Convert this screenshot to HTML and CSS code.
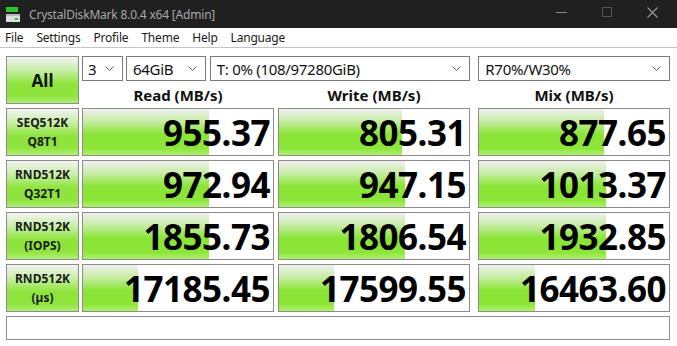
FILE: index.html
```html
<!DOCTYPE html>
<html lang="en">
<head>
    <meta charset="UTF-8">
    <title>CrystalDiskMark 8.0.4 x64 [Admin]</title>
    <link rel="stylesheet" href="styles.css">
</head>
<body>
    <div class="titlebar">
        <svg class="app-icon" width="16" height="16" viewBox="0 0 16 16">
            <rect x="1" y="0" width="12" height="5" fill="#2fc32f"/>
            <rect x="1" y="7" width="14" height="2" fill="#b8b8b8"/>
            <rect x="1" y="9" width="14" height="6" fill="#dcdcdc"/>
            <rect x="10" y="11" width="3" height="2" fill="#2fc32f"/>
        </svg>
        <div class="title">CrystalDiskMark 8.0.4 x64 [Admin]</div>
        <div class="win-buttons">
            <svg width="46" height="28" viewBox="0 0 46 28"><line x1="18" y1="12.5" x2="29" y2="12.5" stroke="#8a8a8a" stroke-width="1"/></svg>
            <svg width="46" height="28" viewBox="0 0 46 28"><rect x="18.5" y="7.5" width="9" height="9" fill="none" stroke="#555" stroke-width="1"/></svg>
            <svg width="46" height="28" viewBox="0 0 46 28"><path d="M17.5 7.5 L27.5 17.5 M27.5 7.5 L17.5 17.5" stroke="#9a9a9a" stroke-width="1.2"/></svg>
        </div>
    </div>

    <div class="menubar">
        <span>File</span>
        <span>Settings</span>
        <span>Profile</span>
        <span>Theme</span>
        <span>Help</span>
        <span>Language</span>
    </div>

    <div class="board">
        <div class="all-button">All</div>

        <div class="controls">
            <div class="combo combo-count">3<svg class="chev" width="9" height="6" viewBox="0 0 9 6"><polyline points="0.5,0.5 4.5,4.5 8.5,0.5" fill="none" stroke="#606060"/></svg></div>
            <div class="combo combo-size">64GiB<svg class="chev" width="9" height="6" viewBox="0 0 9 6"><polyline points="0.5,0.5 4.5,4.5 8.5,0.5" fill="none" stroke="#606060"/></svg></div>
            <div class="combo combo-drive">T: 0% (108/97280GiB)<svg class="chev" width="9" height="6" viewBox="0 0 9 6"><polyline points="0.5,0.5 4.5,4.5 8.5,0.5" fill="none" stroke="#606060"/></svg></div>
            <div class="combo combo-mix">R70%/W30%<svg class="chev" width="9" height="6" viewBox="0 0 9 6"><polyline points="0.5,0.5 4.5,4.5 8.5,0.5" fill="none" stroke="#606060"/></svg></div>
        </div>

        <div class="col-head">Read (MB/s)</div>
        <div class="col-head">Write (MB/s)</div>
        <div class="col-head">Mix (MB/s)</div>

        <div class="test-label">SEQ512K<br>Q8T1</div>
        <div class="result"><div class="bar" style="width: 126px"></div><span>955.37</span></div>
        <div class="result"><div class="bar" style="width: 123px"></div><span>805.31</span></div>
        <div class="result"><div class="bar" style="width: 125px"></div><span>877.65</span></div>

        <div class="test-label">RND512K<br>Q32T1</div>
        <div class="result"><div class="bar" style="width: 126px"></div><span>972.94</span></div>
        <div class="result"><div class="bar" style="width: 126px"></div><span>947.15</span></div>
        <div class="result"><div class="bar" style="width: 127px"></div><span>1013.37</span></div>

        <div class="test-label">RND512K<br>(IOPS)</div>
        <div class="result"><div class="bar" style="width: 126px"></div><span>1855.73</span></div>
        <div class="result"><div class="bar" style="width: 126px"></div><span>1806.54</span></div>
        <div class="result"><div class="bar" style="width: 127px"></div><span>1932.85</span></div>

        <div class="test-label">RND512K<br>(&micro;s)</div>
        <div class="result"><div class="bar" style="width: 55px"></div><span>17185.45</span></div>
        <div class="result"><div class="bar" style="width: 55px"></div><span>17599.55</span></div>
        <div class="result"><div class="bar" style="width: 56px"></div><span>16463.60</span></div>

        <div class="comment"></div>
    </div>
</body>
</html>
```

FILE: styles.css
```css
body {
    margin: 0;
    padding: 0;
    width: 677px;
    height: 346px;
    overflow: hidden;
    background: #ffffff;
    font-family: "Noto Sans", "Open Sans", sans-serif;
    color: #000000;
}
.titlebar {
    height: 28px;
    background: #202020;
    display: flex;
    align-items: center;
}
.titlebar .app-icon {
    margin-left: 5px;
    margin-top: 2px;
}
.titlebar .title {
    margin-left: 8px;
    font-size: 12px;
    color: #a8a8a8;
    letter-spacing: -0.2px;
}
.win-buttons {
    margin-left: auto;
    display: flex;
    margin-right: 1px;
}
.menubar {
    height: 19px;
    border-bottom: 1px solid #c4c4c4;
    display: flex;
    align-items: center;
    gap: 13px;
    padding-left: 5px;
    font-size: 12px;
    color: #1a1a1a;
    letter-spacing: -0.2px;
}
.board {
    display: grid;
    grid-template-columns: 73px 195px 196px 200px;
    grid-template-rows: 25px 19px repeat(4, 48px) 24px;
    row-gap: 4px;
    padding: 8px 0 0 6px;
}
.all-button {
    grid-row: 1 / span 2;
    box-sizing: border-box;
    border: 1px solid #8c8c8c;
    background: linear-gradient(#f4f4f4 0%, #c6eea4 30%, #8ee43c 58%, #8fe53d 85%, #b2f07a 100%);
    display: flex;
    align-items: center;
    justify-content: center;
    font-weight: bold;
    font-size: 17px;
    color: #111;
}
.controls {
    grid-column: 2 / span 3;
    display: flex;
}
.combo {
    box-sizing: border-box;
    height: 25px;
    border: 1px solid #7a7a7a;
    display: flex;
    align-items: center;
    padding-left: 6px;
    padding-right: 8px;
    font-size: 15px;
    color: #111;
    letter-spacing: -0.3px;
}
.combo .chev {
    margin-left: auto;
}
.combo-count {
    margin-left: 3px;
    width: 41px;
    padding-left: 5px;
}
.combo-size {
    margin-left: 3px;
    width: 80px;
}
.combo-drive {
    margin-left: 4px;
    width: 261px;
}
.combo-mix {
    margin-left: 8px;
    width: 192px;
}
.col-head {
    justify-self: end;
    width: 192px;
    text-align: center;
    font-weight: bold;
    font-size: 15px;
    line-height: 21px;
    color: #111;
}
.test-label {
    box-sizing: border-box;
    border: 1px solid #8c8c8c;
    background: linear-gradient(#f4f4f4 0%, #c6eea4 30%, #8ee43c 58%, #8fe53d 85%, #b2f07a 100%);
    display: flex;
    align-items: center;
    justify-content: center;
    text-align: center;
    font-weight: bold;
    font-size: 12px;
    line-height: 19px;
    color: #1a1a1a;
}
.result {
    justify-self: end;
    width: 192px;
    box-sizing: border-box;
    border: 1px solid #8c8c8c;
    position: relative;
    display: flex;
    align-items: center;
    justify-content: flex-end;
    padding-right: 3px;
}
.result .bar {
    position: absolute;
    left: 0;
    top: 0;
    bottom: 0;
    background: linear-gradient(#f0f0f0 0%, #c4eca0 28%, #8ae536 55%, #8ce538 85%, #aef06e 100%);
}
.result span {
    position: relative;
    font-weight: bold;
    font-size: 35px;
    line-height: 46px;
    letter-spacing: -0.5px;
    color: #000;
    padding-top: 2px;
}
.comment {
    grid-column: 1 / span 4;
    box-sizing: border-box;
    border: 1px solid #8c8c8c;
    width: 664px;
}
```
